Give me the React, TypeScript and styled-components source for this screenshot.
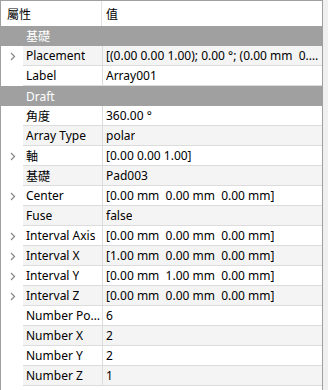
import React from 'react'
import styled, { createGlobalStyle } from 'styled-components'

const GlobalStyle = createGlobalStyle`
  body {
    margin: 0;
    background: #f0f0f0;
    font-family: "Noto Sans", "Noto Sans CJK TC", sans-serif;
    font-size: 12px;
    color: #000;
  }
`

const Frame = styled.div`
  box-sizing: border-box;
  width: 323px;
  height: 390px;
  background: #fff;
  border: 1px solid #a0a0a0;
  border-bottom: none;
  overflow: hidden;
`

const Header = styled.div`
  display: grid;
  grid-template-columns: 101px 1fr;
  height: 25px;
`

const HeaderCell = styled.div<{ $first?: boolean }>`
  display: flex;
  align-items: center;
  padding-left: ${(p) => (p.$first ? '6px' : '4px')};
  border-right: ${(p) => (p.$first ? '1px solid #e3e3e3' : 'none')};
`

const GroupRow = styled.div`
  height: 20px;
  background: #a0a0a0;
  color: #fff;
  display: flex;
  align-items: center;
  padding-left: 25px;
`

const Row = styled.div`
  display: grid;
  grid-template-columns: 22px 80px 1fr;
  height: 20px;
`

const Branch = styled.div`
  display: flex;
  align-items: center;
  padding-left: 9px;
`

const Cell = styled.div<{ $alt: boolean; $name?: boolean }>`
  box-sizing: border-box;
  height: 20px;
  display: flex;
  align-items: center;
  padding-left: 3px;
  padding-right: ${(p) => (p.$name ? '0' : '2px')};
  background: ${(p) => (p.$alt ? '#f4f4f4' : '#fff')};
  border-bottom: 1px solid #dcdcdc;
  border-right: ${(p) => (p.$name ? '1px solid #dcdcdc' : 'none')};
  min-width: 0;
`

const Text = styled.span`
  white-space: pre;
  overflow: hidden;
  text-overflow: ellipsis;
`

const Chevron = () => (
  <svg width="6" height="9" viewBox="0 0 6 9">
    <path d="M1 1 L4.5 4.5 L1 8" fill="none" stroke="#8a8a8a" strokeWidth="1.3" />
  </svg>
)

type Prop = { name: string; value: string; expand?: boolean }
type Group = { title: string; props: Prop[] }

const groups: Group[] = [
  {
    title: '基礎',
    props: [
      { name: 'Placement', value: '[(0.00 0.00 1.00); 0.00 °; (0.00 mm  0.00 mm  0.00 mm)]', expand: true },
      { name: 'Label', value: 'Array001' },
    ],
  },
  {
    title: 'Draft',
    props: [
      { name: '角度', value: '360.00 °' },
      { name: 'Array Type', value: 'polar' },
      { name: '軸', value: '[0.00 0.00 1.00]', expand: true },
      { name: '基礎', value: 'Pad003' },
      { name: 'Center', value: '[0.00 mm  0.00 mm  0.00 mm]', expand: true },
      { name: 'Fuse', value: 'false' },
      { name: 'Interval Axis', value: '[0.00 mm  0.00 mm  0.00 mm]', expand: true },
      { name: 'Interval X', value: '[1.00 mm  0.00 mm  0.00 mm]', expand: true },
      { name: 'Interval Y', value: '[0.00 mm  1.00 mm  0.00 mm]', expand: true },
      { name: 'Interval Z', value: '[0.00 mm  0.00 mm  0.00 mm]', expand: true },
      { name: 'Number Polar', value: '6' },
      { name: 'Number X', value: '2' },
      { name: 'Number Y', value: '2' },
      { name: 'Number Z', value: '1' },
    ],
  },
]

export default function App(): JSX.Element {
  let visual = 0
  return (
    <>
      <GlobalStyle />
      <Frame>
        <Header>
          <HeaderCell $first>屬性</HeaderCell>
          <HeaderCell>值</HeaderCell>
        </Header>
        {groups.map((group) => {
          visual++
          return (
            <React.Fragment key={group.title}>
              <GroupRow>{group.title}</GroupRow>
              {group.props.map((prop) => {
                const alt = visual % 2 === 1
                visual++
                return (
                  <Row key={prop.name}>
                    <Branch>{prop.expand && <Chevron />}</Branch>
                    <Cell $alt={alt} $name>
                      <Text>{prop.name}</Text>
                    </Cell>
                    <Cell $alt={alt}>
                      <Text>{prop.value}</Text>
                    </Cell>
                  </Row>
                )
              })}
            </React.Fragment>
          )
        })}
      </Frame>
    </>
  )
}
